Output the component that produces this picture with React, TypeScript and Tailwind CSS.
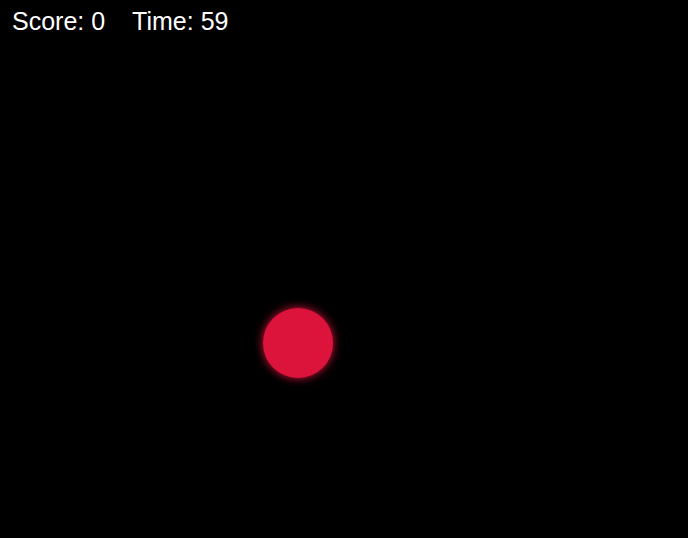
export default function App() {
  return (
    <div className="relative w-[688px] h-[538px] bg-black overflow-hidden" style={{ fontFamily: '"Liberation Sans", Arial, sans-serif' }}>
      <div className="flex gap-[27px] pl-[12px] pt-[7px] text-white text-[25px] leading-[29px]">
        <span>Score: 0</span>
        <span>Time: 59</span>
      </div>
      <div className="absolute left-[263px] top-[308px] w-[70px] h-[70px] rounded-full bg-[#dc143c] shadow-[0_0_10px_#dc143c]" />
    </div>
  );
}
